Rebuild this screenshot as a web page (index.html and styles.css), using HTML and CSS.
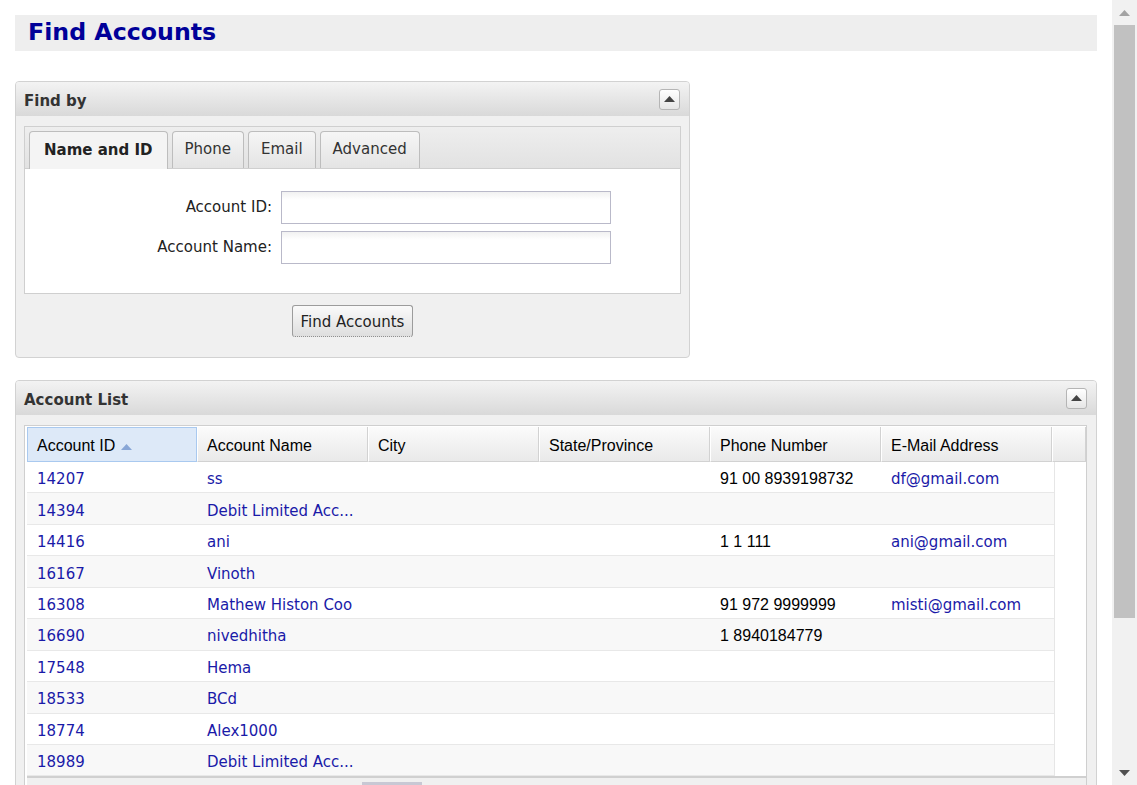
FILE: index.html
```html
<!DOCTYPE html>
<html>
<head>
<meta charset="utf-8">
<title>Find Accounts</title>
<link rel="stylesheet" href="styles.css">
</head>
<body>
<div class="window">
  <div class="page">
    <div class="title-bar"><h1 class="title">Find Accounts</h1></div>

    <section class="panel find-panel">
      <div class="panel-head">
        <span class="panel-title">Find by</span>
        <span class="collapse-btn"><svg width="11" height="6" viewBox="0 0 11 6"><path d="M0 6 L5.5 0 L11 6 Z" fill="#444"/></svg></span>
      </div>
      <div class="panel-body">
        <div class="tabbox">
          <div class="tabstrip">
            <span class="tab active">Name and ID</span>
            <span class="tab">Phone</span>
            <span class="tab">Email</span>
            <span class="tab">Advanced</span>
          </div>
          <div class="tab-content">
            <div class="form-grid">
              <label class="form-label">Account ID:</label>
              <span class="text-input"></span>
              <label class="form-label">Account Name:</label>
              <span class="text-input"></span>
            </div>
          </div>
        </div>
        <div class="button-row"><span class="btn">Find Accounts</span></div>
      </div>
    </section>

    <section class="panel list-panel">
      <div class="panel-head">
        <span class="panel-title">Account List</span>
        <span class="collapse-btn"><svg width="11" height="6" viewBox="0 0 11 6"><path d="M0 6 L5.5 0 L11 6 Z" fill="#444"/></svg></span>
      </div>
      <div class="panel-body list-body">
        <div class="grid">
          <div class="grid-head">
            <span class="hcell sorted">Account ID <svg class="sort-arrow" width="11" height="6" viewBox="0 0 11 6"><path d="M0 6 L5.5 0 L11 6 Z" fill="#88a6d6"/></svg></span>
            <span class="hcell">Account Name</span>
            <span class="hcell">City</span>
            <span class="hcell">State/Province</span>
            <span class="hcell">Phone Number</span>
            <span class="hcell">E-Mail Address</span>
            <span class="hcell filler"></span>
          </div>
          <div class="grid-rows">
            <div class="row"><span class="cell link">14207</span><span class="cell link">ss</span><span class="cell"></span><span class="cell"></span><span class="cell phone">91 00 8939198732</span><span class="cell link">df@gmail.com</span></div>
            <div class="row"><span class="cell link">14394</span><span class="cell link">Debit Limited Acc...</span><span class="cell"></span><span class="cell"></span><span class="cell phone"></span><span class="cell link"></span></div>
            <div class="row"><span class="cell link">14416</span><span class="cell link">ani</span><span class="cell"></span><span class="cell"></span><span class="cell phone">1 1 111</span><span class="cell link">ani@gmail.com</span></div>
            <div class="row"><span class="cell link">16167</span><span class="cell link">Vinoth</span><span class="cell"></span><span class="cell"></span><span class="cell phone"></span><span class="cell link"></span></div>
            <div class="row"><span class="cell link">16308</span><span class="cell link">Mathew Histon Coo</span><span class="cell"></span><span class="cell"></span><span class="cell phone">91 972 9999999</span><span class="cell link">misti@gmail.com</span></div>
            <div class="row"><span class="cell link">16690</span><span class="cell link">nivedhitha</span><span class="cell"></span><span class="cell"></span><span class="cell phone">1 8940184779</span><span class="cell link"></span></div>
            <div class="row"><span class="cell link">17548</span><span class="cell link">Hema</span><span class="cell"></span><span class="cell"></span><span class="cell phone"></span><span class="cell link"></span></div>
            <div class="row"><span class="cell link">18533</span><span class="cell link">BCd</span><span class="cell"></span><span class="cell"></span><span class="cell phone"></span><span class="cell link"></span></div>
            <div class="row"><span class="cell link">18774</span><span class="cell link">Alex1000</span><span class="cell"></span><span class="cell"></span><span class="cell phone"></span><span class="cell link"></span></div>
            <div class="row"><span class="cell link">18989</span><span class="cell link">Debit Limited Acc...</span><span class="cell"></span><span class="cell"></span><span class="cell phone"></span><span class="cell link"></span></div>
          </div>
          <div class="hscroll"><span class="hthumb"></span></div>
        </div>
      </div>
    </section>
  </div>

  <div class="vscroll">
    <span class="vs-arrow"><svg width="11" height="6" viewBox="0 0 11 6"><path d="M0 6 L5.5 0 L11 6 Z" fill="#a3a3a3"/></svg></span>
    <span class="vs-thumb"></span>
    <span class="vs-track"></span>
    <span class="vs-arrow"><svg width="11" height="6" viewBox="0 0 11 6"><path d="M0 0 L5.5 6 L11 0 Z" fill="#505050"/></svg></span>
  </div>
</div>
</body>
</html>
```

FILE: styles.css
```css
html, body {
  margin: 0;
  padding: 0;
  background: #ffffff;
}

.window {
  display: flex;
  width: 1137px;
  height: 785px;
  overflow: hidden;
  font-family: "DejaVu Sans", Verdana, sans-serif;
}

.page {
  flex: 1;
  padding: 15px 15px 0 15px;
  overflow: hidden;
}

/* Title */
.title-bar {
  background: #eeeeee;
  height: 36px;
  padding-left: 13px;
}
.title {
  margin: 0;
  font-size: 23.7px;
  line-height: 34px;
  font-weight: bold;
  color: #000099;
}

/* Panels */
.panel {
  border: 1px solid #d2d2d2;
  border-radius: 4px;
  background: #f0f0f0;
}
.find-panel {
  width: 673px;
  margin-top: 30px;
}
.list-panel {
  margin-top: 22px;
}
.panel-head {
  height: 34px;
  box-sizing: border-box;
  display: flex;
  align-items: center;
  justify-content: space-between;
  padding: 0 9px 0 8px;
  background: linear-gradient(#f3f3f3, #d9d9d9);
  border-radius: 3px 3px 0 0;
}
.panel-title {
  font-weight: bold;
  font-size: 15px;
  color: #333333;
  padding-top: 4px;
}
.collapse-btn {
  width: 19px;
  height: 19px;
  border: 1px solid #b5b5b5;
  border-radius: 3px;
  background: linear-gradient(#ffffff, #e6e6e6);
  display: flex;
  align-items: center;
  justify-content: center;
}

.panel-body {
  padding: 10px 8px 20px 8px;
}

/* Tabs */
.tabbox {
  border: 1px solid #cfcfcf;
  background: #ffffff;
}
.tabstrip {
  display: flex;
  gap: 4px;
  padding: 4px 4px 0 4px;
  background: linear-gradient(#eeeeee, #e2e2e2);
  border-bottom: 1px solid #cfcfcf;
  height: 37px;
}
.tab {
  display: flex;
  align-items: center;
  padding: 0 12px 2px 12px;
  border: 1px solid #bdbdbd;
  border-bottom: none;
  border-radius: 4px 4px 0 0;
  background: linear-gradient(#f6f6f6, #e4e4e4);
  font-size: 15px;
  color: #333333;
}
.tab.active {
  font-weight: bold;
  background: #f4f4f4;
  color: #222222;
  padding: 0 14px 2px 14px;
  margin-bottom: -1px;
}

.tab-content {
  height: 124px;
  padding-top: 22px;
  box-sizing: border-box;
}
.form-grid {
  display: grid;
  grid-template-columns: 247px 330px;
  column-gap: 9px;
  row-gap: 7px;
}
.form-label {
  text-align: right;
  font-size: 15px;
  line-height: 33px;
  color: #222222;
}
.text-input {
  height: 31px;
  border: 1px solid #b9b9c9;
  background: linear-gradient(#f1f1f1, #ffffff 8px);
}

.button-row {
  display: flex;
  justify-content: center;
  margin-top: 11px;
}
.btn {
  height: 30px;
  padding: 0 8px;
  border: 1px solid #9c9c9c;
  border-bottom: 1px dotted #777777;
  border-radius: 3px;
  background: linear-gradient(#fafafa, #dedede);
  font-size: 15px;
  line-height: 32px;
  color: #222222;
}

/* Grid */
.list-body {
  padding: 10px 9px 0 8px;
}
.grid {
  border: 1px solid #cfcfcf;
  padding: 1px 0 0 2px;
  background: #ffffff;
}
.grid-head {
  display: flex;
  height: 35px;
}
.hcell {
  width: 171px;
  box-sizing: border-box;
  display: flex;
  align-items: center;
  gap: 6px;
  padding: 3px 0 0 9px;
  border-right: 1px solid #d2d2d2;
  border-left: 1px solid #ffffff;
  border-bottom: 1px solid #d2d2d2;
  background: linear-gradient(#fbfbfb, #e9e9e9);
  font-family: "Liberation Sans", Arial, sans-serif;
  font-size: 16px;
  color: #000000;
}
.hcell:first-child {
  width: 170px;
}
.hcell.sorted {
  background: #dde9f8;
  border: 1px solid #a9c9ef;
}
.hcell.filler {
  flex: 1;
  width: auto;
}
.sort-arrow {
  margin-top: 1px;
}

.grid-rows {
  width: 1027px;
  border-right: 1px solid #e6e6e6;
}
.row {
  display: flex;
  height: 31.45px;
  box-sizing: border-box;
  padding-top: 4px;
  border-bottom: 1px solid #e8e8e8;
  align-items: center;
}
.row:nth-child(even) {
  background: #f8f8f8;
}
.cell {
  width: 171px;
  padding-left: 10px;
  box-sizing: border-box;
  font-size: 15px;
  white-space: nowrap;
  overflow: hidden;
}
.cell:first-child {
  width: 170px;
}
.cell.link {
  color: #1a1aa8;
}
.cell.phone {
  font-family: "Liberation Sans", Arial, sans-serif;
  font-size: 16px;
  color: #000000;
}

.hscroll {
  height: 16px;
  border-top: 2px solid #d0d0d0;
  background: #f0f0f0;
  padding-left: 335px;
}
.hthumb {
  display: block;
  width: 60px;
  height: 8px;
  margin-top: 4px;
  background: #c8c8d4;
}

/* Browser scrollbar */
.vscroll {
  width: 25px;
  background: #f1f1f1;
  display: flex;
  flex-direction: column;
  align-items: center;
}
.vs-arrow {
  height: 25px;
  display: flex;
  align-items: center;
  justify-content: center;
}
.vs-thumb {
  width: 21px;
  height: 593px;
  background: #c1c1c1;
}
.vs-track {
  flex: 1;
}
```
